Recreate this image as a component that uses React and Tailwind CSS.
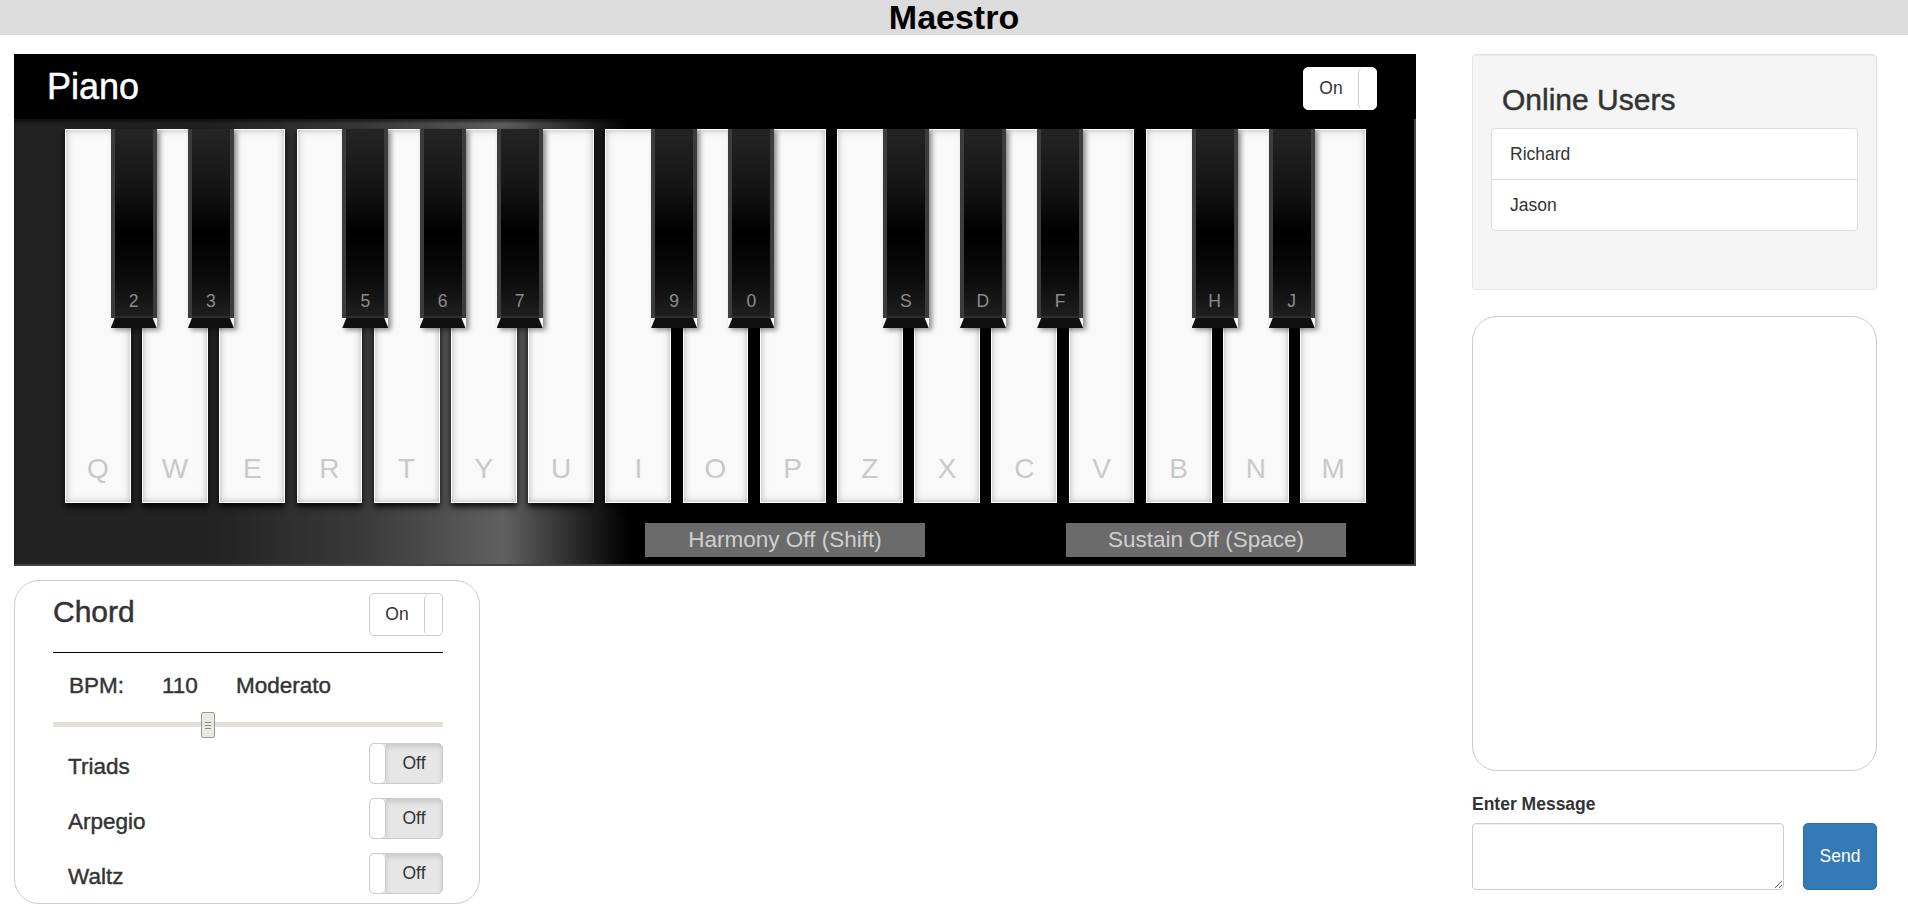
import React from "react";

const whiteKeys = ["Q","W","E","R","T","Y","U","I","O","P","Z","X","C","V","B","N","M"];
const blackAfter = { 0: "2", 1: "3", 3: "5", 4: "6", 5: "7", 7: "9", 8: "0", 10: "S", 11: "D", 12: "F", 14: "H", 15: "J" };

function BlackKey({ label }) {
  return (
    <div className="absolute left-[45.7px] top-0 z-10 flex h-[199px] w-[46px] flex-col shadow-[3px_2px_5px_rgba(0,0,0,0.45)]">
      <div className="flex flex-1 items-end justify-center border-x-4 border-[#3c3c3c] bg-[linear-gradient(180deg,#242424_0%,#151515_30%,#000_55%,#0c0c0c_80%,#1f1f1f_100%)] pb-[8px] text-[17.5px] leading-[17.5px] text-[#8c8c8c] shadow-[inset_0_-2px_0_#2e2e2e]">
        {label}
      </div>
      <div className="h-[10px] bg-[#101010] [clip-path:polygon(4px_0,42px_0,100%_100%,0_100%)]"></div>
    </div>
  );
}

function WhiteKey({ label, black }) {
  return (
    <div className="relative flex-1">
      <div className="flex h-full items-end justify-center border border-white bg-[#f9f9f9] pb-[19px] text-[28px] leading-[28px] text-[#c9c9c9] shadow-[inset_0_0_7px_rgba(0,0,0,0.28),0_4px_6px_rgba(0,0,0,0.85)]">
        {label}
      </div>
      {black && <BlackKey label={black} />}
    </div>
  );
}

function OnToggle({ className = "" }) {
  return (
    <div className={"flex h-[43px] w-[74px] overflow-hidden rounded-[5px] border border-[#ccc] bg-white " + className}>
      <div className="flex flex-1 items-center justify-center text-[17.5px] text-[#333]">On</div>
      <div className="w-[18px] rounded-[5px] border-l border-[#ccc] bg-white"></div>
    </div>
  );
}

function OffToggle() {
  return (
    <div className="flex h-[41px] w-[74px] overflow-hidden rounded-[5px] border border-[#ccc] bg-[#e6e6e6]">
      <div className="w-[16px] rounded-[5px] border-r border-[#ccc] bg-white"></div>
      <div className="flex flex-1 items-center justify-center text-[17.5px] text-[#333] shadow-[inset_0_3px_5px_rgba(0,0,0,0.125)]">Off</div>
    </div>
  );
}

function OptionRow({ label, first }) {
  return (
    <div className={"flex items-center justify-between " + (first ? "mt-[16px]" : "mt-[14px]")}>
      <span className="pl-[15px] pt-[6px] text-[22.5px] leading-[25px] text-[#333] [-webkit-text-stroke:0.4px_#333]">{label}</span>
      <OffToggle />
    </div>
  );
}

export default function App() {
  return (
    <div className="min-h-screen bg-white font-['Liberation_Sans',Arial,sans-serif] text-[#333]">
      <header className="h-[35px] bg-[#dcdcdc] text-center text-[34px] font-bold leading-[35px] text-black">
        Maestro
      </header>

      <div className="flex pl-[14px] pt-[19px]">
        {/* Left column */}
        <div className="flex w-[1402px] flex-col">
          {/* Piano */}
          <div className="flex h-[512px] flex-col bg-black">
            <div className="flex h-[65px] items-center justify-between bg-black pl-[33px] pr-[39px]">
              <h1 className="text-[36px] leading-[1.1] text-white [-webkit-text-stroke:0.5px_#fff]">Piano</h1>
              <OnToggle className="mt-[4px] h-[43px] w-[73px] border-white" />
            </div>
            <div className="flex flex-1 flex-col border-b-2 border-r-2 border-[#444] bg-[linear-gradient(90deg,#222_0%,#222_14%,#3a3a3a_25%,#606060_35%,#000_44%,#000_100%)] pt-[10px] shadow-[inset_0_3px_3px_rgba(0,0,0,0.5)]">
              <div className="ml-[51px] flex h-[374px] w-[1301px] gap-[11.5px]">
                {whiteKeys.map((k, i) => (
                  <WhiteKey key={k} label={k} black={blackAfter[i]} />
                ))}
              </div>
              <div className="mt-[20px] flex">
                <div className="ml-[631px] flex h-[34px] w-[280px] items-center justify-center bg-[#6b6b6b] text-[22.5px] text-[#cfcfcf]">
                  Harmony Off (Shift)
                </div>
                <div className="ml-[141px] flex h-[34px] w-[280px] items-center justify-center bg-[#6b6b6b] text-[22.5px] text-[#cfcfcf]">
                  Sustain Off (Space)
                </div>
              </div>
            </div>
          </div>

          {/* Chord panel */}
          <div className="mt-[14px] flex h-[324px] w-[466px] flex-col rounded-[25px] border border-[#ccc] pl-[38px] pr-[36px] pt-[12px]">
            <div className="flex items-start justify-between">
              <h2 className="mt-[2px] text-[30px] leading-[33px] text-[#333] [-webkit-text-stroke:0.5px_#333]">Chord</h2>
              <OnToggle />
            </div>
            <div className="mt-[16px] h-px bg-black"></div>
            <div className="mt-[20px] flex text-[22.5px] leading-[25px] text-[#333] [-webkit-text-stroke:0.4px_#333]">
              <span className="w-[109px] pl-[16px]">BPM:</span>
              <span className="w-[74px]">110</span>
              <span>Moderato</span>
            </div>
            <div className="relative mt-[24px] h-[5px] bg-[#e3ded7]">
              <div className="absolute left-[148px] top-[-10px] flex h-[26px] w-[14px] flex-col items-center justify-center gap-[2px] rounded-[2px] border border-[#9a958f] bg-[#ece9e5]">
                <div className="h-px w-[6px] bg-[#8a857f]"></div>
                <div className="h-px w-[6px] bg-[#8a857f]"></div>
                <div className="h-px w-[6px] bg-[#8a857f]"></div>
              </div>
            </div>
            <OptionRow label="Triads" first />
            <OptionRow label="Arpegio" />
            <OptionRow label="Waltz" />
          </div>
        </div>

        {/* Right column */}
        <div className="ml-[56px] flex w-[405px] flex-col">
          <div className="h-[236px] rounded-[4px] border border-[#e3e3e3] bg-[#f5f5f5] px-[18px] pt-[28px] shadow-[inset_0_1px_1px_rgba(0,0,0,0.05)]">
            <h2 className="pl-[11px] text-[30px] leading-[33px] text-[#333] [-webkit-text-stroke:0.5px_#333]">Online Users</h2>
            <div className="mt-[12px] overflow-hidden rounded-[4px] border border-[#ddd] bg-white">
              <div className="border-b border-[#ddd] px-[18px] py-[12.5px] text-[17.5px] leading-[25px]">Richard</div>
              <div className="px-[18px] py-[12.5px] text-[17.5px] leading-[25px]">Jason</div>
            </div>
          </div>

          <div className="mt-[26px] h-[455px] rounded-[25px] border border-[#ccc]"></div>

          <label className="mt-[21px] text-[17.5px] font-bold leading-[25px] text-[#333]">Enter Message</label>
          <div className="mt-[6px] flex">
            <textarea className="h-[67px] w-[312px] rounded-[4px] border border-[#ccc] shadow-[inset_0_1px_1px_rgba(0,0,0,0.075)] outline-none"></textarea>
            <button className="ml-[19px] h-[67px] w-[74px] rounded-[5px] border border-[#2e6da4] bg-[#337ab7] text-[17.5px] text-white">
              Send
            </button>
          </div>
        </div>
      </div>
    </div>
  );
}
